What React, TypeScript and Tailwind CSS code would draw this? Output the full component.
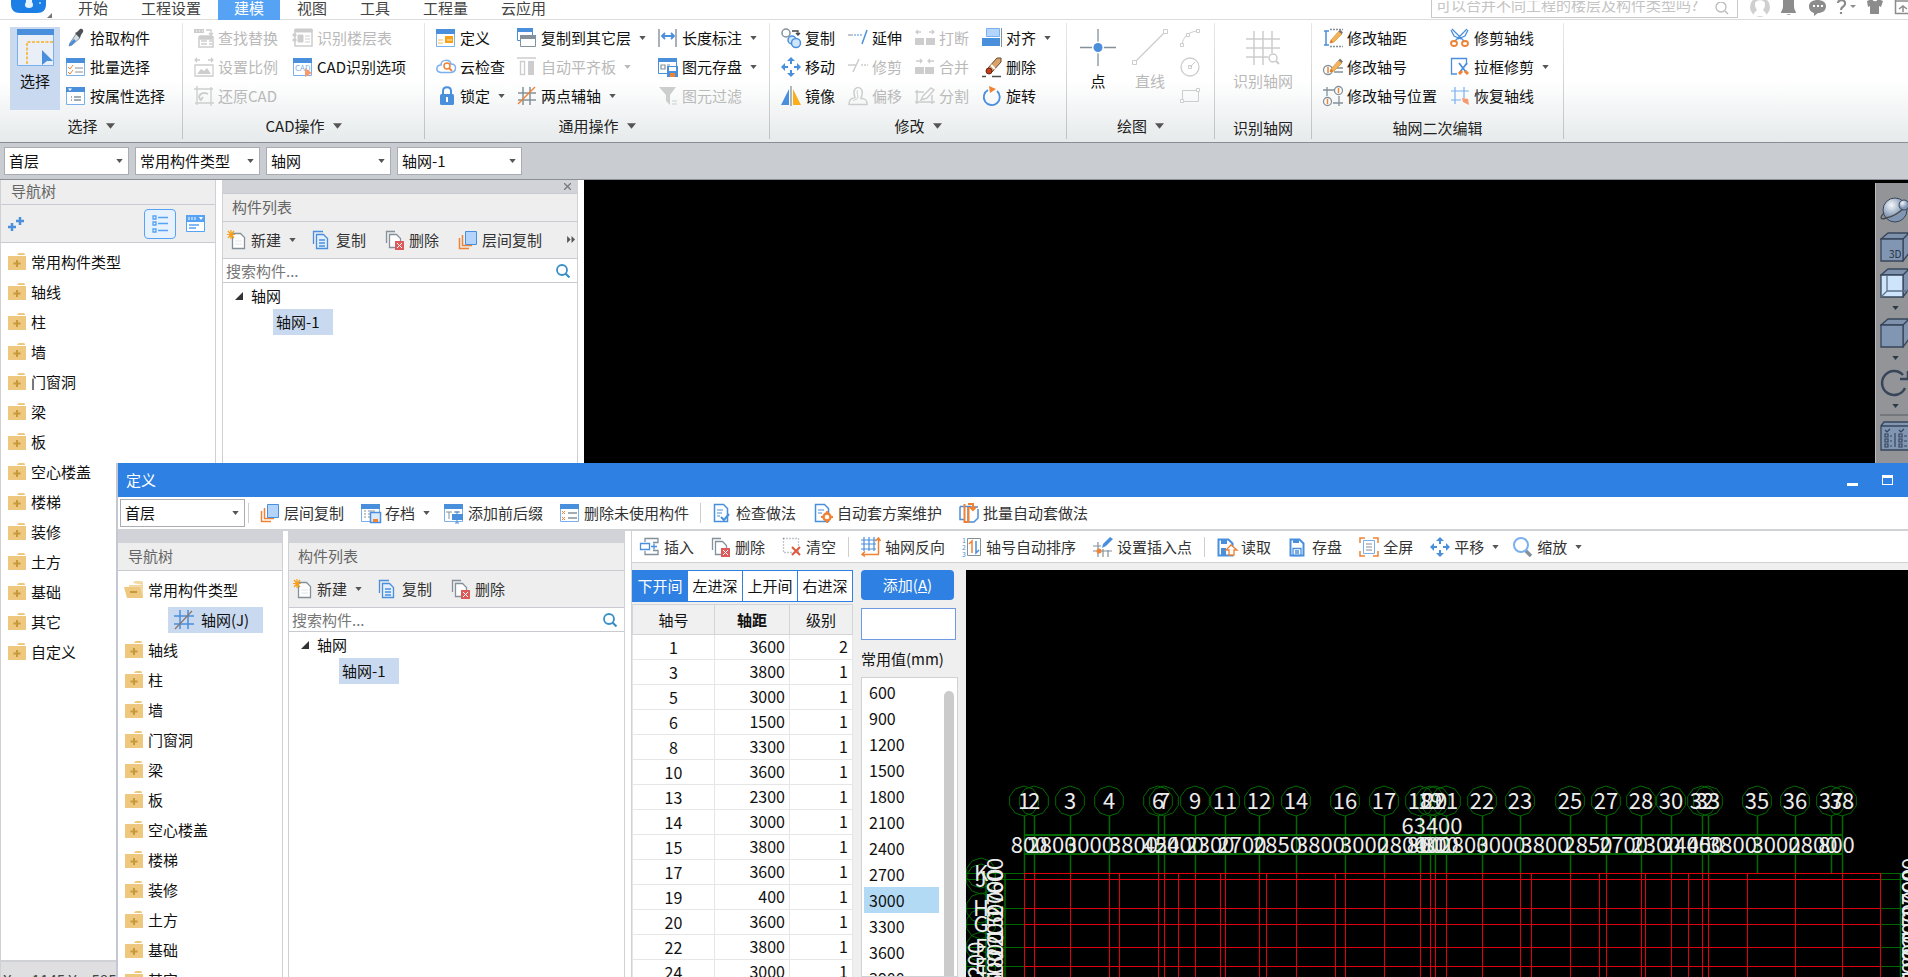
import type { ReactNode } from 'react';

const B = '#4a8fdc';
const L = '#7ab0ee';
const G = '#84919b';
const D = '#cdcdcd';
const O = '#f08233';

const windowIcon = (body: ReactNode) => (
  <>
    <path d="M.5 1.5h18v17H.5z" fill="#fff" stroke={L} />
    <path d="M0 1h19v5H0z" fill={B} />
    {body}
  </>
);

const pencil = (
  <>
    <path d="M8 12 16 3l3 3-8 8-4 1z" fill="#f3b55c" stroke="#d98f38" strokeWidth=".7" />
    <path d="m15.500 3.500 1.500-2 3 3-1.500 1.500z" fill="#7c7474" />
    <path d="m7 15 1-3 2 2z" fill="#e06a22" />
  </>
);

const page = (stroke: string) => (
  <path d="M5.500 3.500h8l4 4v11h-12z" fill="#fff" stroke={stroke} strokeWidth="1.300" />
);

const arrows4 = (
  <path
    d="M10 0 6 4h3v3h2V4h3zM10 20l-4-4h3v-3h2v3h3zM0 10l4-4v3h3v2H4v3zM20 10l-4-4v3h-3v2h3v3z"
    fill={B}
  />
);

const stackIcon = (
  <>
    <path d="M1.500 8v10.500H11M4.500 5v10.500H14" fill="none" stroke={O} strokeWidth="1.500" />
    <path d="M7.500 1.500h11v13h-11z" fill="#b4d5fb" stroke={B} />
  </>
);

const icons: Record<string, ReactNode> = {
  pick: (
    <>
      <path d="m10 6 4 4-8 7-3 1 1-3z" fill="#d5dde4" stroke="#8a949c" />
      <path d="m3 18 1-3 4-4 2 2-4 4z" fill={B} />
      <path d="m9 5 2-1 3-3c2-1 4 1 3 3l-2 3-1 3z" fill="#4d5358" />
    </>
  ),
  batch: windowIcon(
    <>
      <path d="m2 10 2 2 3-4M2 15l2 2 3-4" fill="none" stroke={O} />
      <path d="M9 11h8M9 15h8" stroke={G} />
    </>
  ),
  props: windowIcon(
    <>
      <path d="M2 2.500h4L4 5z" fill="#fff" />
      <path d="M5 11h1m2 0h7M5 14h1m2 0h7" stroke={G} strokeWidth="1.400" />
    </>
  ),
  find: (
    <>
      <path d="M0 1h10v4H0z" fill={D} />
      <path d="M2 3h1m2 0h1m2 0h1" stroke="#fff" />
      <path d="M12 2h5v5m-2-2 2 2 2-2" fill="none" stroke={D} strokeWidth="1.300" />
      <path d="M5 9h14v10H5z" fill="#fff" stroke={D} strokeWidth="1.500" />
      <path d="M6 8h12v3H6zM7 13h6m-6 3h6m2-3h3m-3 3h3" fill={D} stroke={D} strokeWidth="1.300" />
    </>
  ),
  scale: (
    <>
      <path d="M1 3h5M3 1 1 3l2 2M19 3h-5m3-2 2 2-2 2" fill="none" stroke={D} strokeWidth="1.300" />
      <path d="M1 8h18v11H1z" fill="#fff" stroke={D} strokeWidth="1.300" />
      <path d="m3 17 4-5 3 2 3-3 4 6z" fill={D} />
    </>
  ),
  restore: (
    <>
      <path d="M3 0v19M0 3h19M17 1v19M1 17h19" stroke={D} strokeWidth="1.300" />
      <path d="M5 12c0-5 5-6 9-4M5 12l2 2 2-3" fill="none" stroke={D} strokeWidth="1.800" />
    </>
  ),
  floorTable: (
    <>
      <path d="M2 2h17v16H2z" fill="#fff" stroke={D} strokeWidth="1.500" />
      <path d="M2 1h17v3H2zM0 6h3v2H0zm0 5h3v2H0zm5-4h5v7H5zM12 8h5m-5 3h5m-5 3h5" fill={D} stroke={D} />
    </>
  ),
  cad: windowIcon(
    <>
      <text x="2" y="14" fontSize="8" fill={L}>
        CAD
      </text>
      <path d="m12 11 7 5-7 4z" fill="#f59a6b" />
    </>
  ),
  define: windowIcon(
    <>
      <path d="M9 8h8v7H9z" fill="#f6a11b" />
      <path d="M11 12h5M2 12h5M2 15h5" stroke="#fbd28b" strokeWidth="1.300" />
    </>
  ),
  cloud: (
    <>
      <path
        d="M5 15.500C-1 15 0 8 5 8c0-6 9-6 10-1 6 0 6 8 0 8.500z"
        fill="#fff"
        stroke={L}
        strokeWidth="1.500"
      />
      <circle cx="11" cy="9" r="3" fill="none" stroke={O} strokeWidth="1.500" />
      <path d="m13 11 3 3" stroke={O} strokeWidth="1.800" />
    </>
  ),
  lock: (
    <>
      <path d="M7 9V5c0-5 8-5 8 0v4" fill="none" stroke={B} strokeWidth="2" />
      <rect x="4" y="8" width="14" height="11" rx="1.500" fill={B} />
      <path d="M10 11h2v5h-2z" fill="#fff" />
    </>
  ),
  copyFloor: (
    <>
      <path d="M.5.500h15v12H.5z" fill="#fff" stroke={B} />
      <path d="M0 0h16v4H0z" fill={B} />
      <path d="M3.500 7.500h15v11h-15z" fill="#fff" stroke={G} />
      <path d="M3 7h16v4H3z" fill={G} />
    </>
  ),
  alignSlab: (
    <>
      <path d="M0 1h19M3.500 4.500h4v13h-4z" fill="none" stroke={D} strokeWidth="1.400" />
      <path d="M11 4h6v14h-6z" fill={D} />
    </>
  ),
  twoPoint: (
    <>
      <path d="M6 1v18M13 1v18M1 7h18M1 14h18" stroke={G} strokeWidth="1.500" />
      <path d="M1 18 18 1" stroke={O} strokeWidth="1.500" />
    </>
  ),
  measure: (
    <>
      <path d="M1 1v18M18 1v18" stroke={G} strokeWidth="1.400" />
      <path d="M4 8h12M7 5 4 8l3 3m6-6 3 3-3 3" fill="none" stroke={B} strokeWidth="1.800" />
    </>
  ),
  store: (
    <>
      <path d="M.5 1.500h18v15H.5z" fill="#fff" stroke={B} />
      <path d="M0 1h19v4H0z" fill={B} />
      <path d="M3 8h4v4H3zM9 8h3" fill="none" stroke={G} strokeWidth="1.200" />
      <path d="M9 9h11v11H9z" fill={B} />
      <path d="M11 10h7v4h-7z" fill="#fff" />
      <path d="M12 16h5v4h-5z" fill={O} />
    </>
  ),
  filter: (
    <>
      <path d="M1 1h17l-6 8v10l-4-4V9z" fill={D} />
      <path d="M14 15h5m-5 3h5" stroke={D} />
    </>
  ),
  copy2: (
    <>
      <circle cx="5" cy="5" r="4" fill="none" stroke={G} strokeWidth="1.500" />
      <path d="M11 3h6v4m-2-2 2 2 2-2" fill="none" stroke="#444" strokeWidth="1.300" />
      <circle cx="11" cy="12" r="4" fill="#cfe5fb" stroke={B} strokeWidth="1.500" />
      <circle cx="15" cy="15" r="4.500" fill="#cfe5fb" stroke={B} strokeWidth="1.500" />
    </>
  ),
  move: arrows4,
  mirror: (
    <>
      <path d="M8 3v16H0z" fill={B} />
      <path d="M10 0v20" stroke={G} strokeWidth="1.300" />
      <path d="M12 3v16h8z" fill="#f9ae1c" />
    </>
  ),
  extend: (
    <>
      <path d="M0 7h5" stroke={G} />
      <path d="M6 7h8" stroke={B} strokeDasharray="2 1" />
      <path d="m14 16 5-14" stroke={B} strokeWidth="1.500" />
    </>
  ),
  trim: (
    <path d="M0 8h8m5 0h2m1 0h2m1 0h1M5 15 11 2" stroke={D} strokeWidth="1.500" />
  ),
  offset: (
    <>
      <path
        d="M1 18.500h18c0-4-1-6-6-6l1-4c2-9-9-9-8-1l1 4c-4 1-6 2-6 7z"
        fill="none"
        stroke={D}
        strokeWidth="1.500"
      />
      <path d="M5 15c1-2 5-1 5-4 0-2-2-6 0-7" fill="none" stroke={D} />
    </>
  ),
  breakAt: (
    <>
      <path d="M0 10h9v7H0zm11 0h9v7h-9z" fill={D} />
      <path d="M1 4h5M3 2 1 4l2 2m16-2h-5m3-2 2 2-2 2" fill="none" stroke={D} strokeWidth="1.300" />
    </>
  ),
  merge: (
    <>
      <path d="M0 10h9v7H0zm10 0h9v7h-9z" fill={D} />
      <path d="M1 4h6M5 2l2 2-2 2m14-2h-6m2-2-2 2 2 2" fill="none" stroke={D} strokeWidth="1.300" />
    </>
  ),
  split: (
    <>
      <path d="M0 6h9M2 4v14M0 16h20M17 9v9" stroke={D} strokeWidth="1.500" />
      <path d="m6 14 2-4 8-8 3 2-7 8z" fill="#fff" stroke={D} strokeWidth="1.500" />
    </>
  ),
  align: (
    <>
      <path d="M4.500.500h13v8h-13z" fill="#b4d5fb" stroke={L} />
      <path d="M0 10h18v8H0z" fill={B} />
      <path d="M19.500 0v19" stroke={G} />
    </>
  ),
  erase: (
    <>
      <path d="m6 11 9-10h4v4l-9 10z" fill="#d9a46c" stroke="#69472d" />
      <path d="m9 8 4 4" stroke="#fff" strokeWidth="2" />
      <ellipse cx="7" cy="14" rx="3" ry="3" fill="#c93a17" stroke="#5c2a1a" />
      <path d="M0 19.500h4m6 0h9" stroke="#4d4d4d" strokeWidth="1.400" />
    </>
  ),
  rotate: (
    <>
      <path d="M6 4a8 8 0 1 0 9 1" fill="none" stroke={B} strokeWidth="1.800" />
      <path d="m7 0 7 3-6 4z" fill={O} />
    </>
  ),
  arc: (
    <>
      <path d="M2 17C3 9 8 4 17 3" fill="none" stroke={D} />
      <path d="M.5 15.500h3v3h-3zM16.500 1.500h3v3h-3zM6.500 5.500h3v3h-3z" fill="#fff" stroke={D} />
    </>
  ),
  circle: (
    <>
      <circle cx="10" cy="10" r="9" fill="none" stroke={D} strokeWidth="1.300" />
      <path d="m10 10 5-5M8.500 8.500h3v3h-3z" fill="#fff" stroke={D} />
    </>
  ),
  rect: (
    <>
      <path d="M2.500 4.500h16v11h-16z" fill="none" stroke={D} />
      <path d="M.5 13.500h3v3h-3zM16.500 2.500h3v3h-3z" fill="#fff" stroke={D} />
    </>
  ),
  axisGap: (
    <>
      <path d="M3 3v14M1 3h5M1 17h5" stroke={B} strokeWidth="1.500" />
      <path d="M7 1.500h13M7 18.500h13" stroke={G} strokeWidth="1.500" strokeDasharray="2 1" />
      {pencil}
    </>
  ),
  axisNo: (
    <>
      <circle cx="5" cy="13" r="4.500" fill="#fff" stroke={G} strokeWidth="1.300" />
      <path d="M5 10v6" stroke={O} strokeWidth="1.500" />
      <path d="M11 15h9M14 11h6" stroke={G} strokeWidth="1.300" />
      {pencil}
    </>
  ),
  axisPos: (
    <>
      <path d="M4 1v9M0 4h12M16 10v10M10 17h10" stroke={G} strokeWidth="1.300" />
      <circle cx="15.500" cy="4.500" r="4" fill="#fff" stroke={G} strokeWidth="1.300" />
      <circle cx="4.500" cy="15.500" r="4" fill="#fff" stroke={G} strokeWidth="1.300" />
      <path d="M15.500 2v5M4.500 13v5" stroke={O} strokeWidth="1.500" />
    </>
  ),
  scissors: (
    <>
      <path d="m2 1 12 12M17 1 5 13M1 2l3 6 7 3M18 2l-3 6-7 3" fill="none" stroke={B} strokeWidth="1.300" />
      <ellipse cx="4" cy="15.500" rx="3" ry="2.500" fill="none" stroke={O} strokeWidth="1.800" />
      <ellipse cx="15" cy="15.500" rx="3" ry="2.500" fill="none" stroke={O} strokeWidth="1.800" />
    </>
  ),
  boxTrim: (
    <>
      <path d="M7 17H1.500V1.500h15V8" fill="none" stroke={B} strokeWidth="1.300" />
      <path d="m9 6 7 9M17 6l-7 9" stroke={B} strokeWidth="1.800" />
      <path d="m9 17 3-3m6 3-3-3" stroke={O} strokeWidth="3" />
    </>
  ),
  axisBack: (
    <>
      <path d="M5 1v17M14 1v11M1 5h18M1 14h10" stroke={L} strokeWidth="1.200" />
      <path d="m12 12 6 1 1 6-6-3z" fill="#f59a6b" />
    </>
  ),
  create: (
    <>
      {page(G)}
      <path d="M4 0v9M0 4.500h8M1 1l6 7M7 1 1 8" stroke="#f6a11b" strokeWidth="1.200" />
      <path d="M8 11h7m-7 3h7" stroke="#dfe6ea" />
    </>
  ),
  copyDoc: (
    <>
      <path d="M1.500 14V1.500H11" fill="none" stroke={B} strokeWidth="1.300" />
      <path d="M4.500 4.500h7l4 4v10h-11z" fill="#e3effc" stroke={B} strokeWidth="1.300" />
      <path d="M7 10h6m-6 3h6m-6 3h6" stroke={B} strokeWidth="1.300" />
    </>
  ),
  deleteDoc: (
    <>
      <path d="M1.500 13V1.500H10" fill="none" stroke={G} strokeWidth="1.300" />
      <path d="M4.500 4.500h7l4 4v9h-11z" fill="#fff" stroke={G} strokeWidth="1.300" />
      <path d="M10 11h9v9h-9z" fill="#dc5a5a" />
      <path d="m12 13 5 5m0-5-5 5" stroke="#fff" />
    </>
  ),
  layers: stackIcon,
  archive: windowIcon(
    <>
      <path d="M3 8h2m2 0h7M3 11h2m2 0h3M3 14h2m2 0h3" stroke={G} />
      <path d="M9.500 9.500h10v10h-10z" fill="#dcebfc" stroke={B} strokeWidth="1.500" />
      <path d="M12 16h5v3h-5z" fill={O} />
    </>
  ),
  prefix: windowIcon(
    <>
      <path d="M2 9h6M5 9v7M10 9h6" stroke={G} />
      <path d="M8 11h11v6H8z" fill={B} />
      <path d="M13 9v11m-2-11h4m-4 11h4" stroke={B} />
    </>
  ),
  removeUnused: windowIcon(
    <>
      <path d="m2 8 3 3m0-3-3 3m0 3 3 3m0-3-3 3" stroke={O} />
      <path d="M8 10h9m-9 5h9" stroke={G} strokeWidth="1.300" />
    </>
  ),
  check: (
    <>
      <path d="M2.500 1.500h9l4 4v13h-13z" fill="#fff" stroke={B} strokeWidth="1.500" />
      <path d="M5 7h6m-6 3h5m-5 3h3" stroke={B} />
      <path d="m9 14 3 3 5-6" fill="none" stroke={B} strokeWidth="2" />
    </>
  ),
  auto: (
    <>
      <path d="M2.500 1.500h9l4 4v13h-13z" fill="#fff" stroke={B} strokeWidth="1.500" />
      <path d="M5 7h6m-6 3h4" stroke={B} />
      <circle cx="14" cy="14" r="3.500" fill="#fff" stroke={O} strokeWidth="2.500" />
      <path d="M14 8v3m0 6v3M8 14h3m6 0h3" stroke={O} strokeWidth="1.800" />
    </>
  ),
  batchAuto: (
    <>
      <path d="M1 3.500h11m-11 0v13h4M19 6v9l-4 4H9V4h10" fill="#fff" stroke={B} strokeWidth="1.500" />
      <path d="M5.500 1v18h4V4M9 1h5v6m-3-3 3 3 3-3" fill="none" stroke={O} strokeWidth="2" />
    </>
  ),
  insert: (
    <>
      <path d="M5 5V1.500h13v4h-5M5 14v3.500h13v-4h-5" fill="none" stroke={G} strokeWidth="1.300" />
      <path d="M.5 6.500h9v6h-9z" fill="#fff" stroke={B} strokeWidth="1.300" />
      <path d="M11 9.500h6m-3-3v6" stroke={B} strokeWidth="1.300" />
    </>
  ),
  clear: (
    <>
      <path d="M1.500 1.500h15v14h-15z" fill="none" stroke={G} strokeDasharray="1 2" strokeWidth="1.300" />
      <path d="m10 10 8 8m0-8-8 8" stroke="#dd5a3c" strokeWidth="2" />
    </>
  ),
  reverse: (
    <>
      <path d="M3 0v14M8 0v14M13 0v14M0 3h15M0 7h15M0 12h15" stroke={B} strokeWidth="1.200" />
      <path d="M17.500 17V1m-3 3 3-3 2 3M18 17.500H1m3-3-3 3 3 2" fill="none" stroke={O} strokeWidth="1.500" />
    </>
  ),
  sort: (
    <>
      <text x="0" y="6" fontSize="7" fill={B}>1</text>
      <text x="0" y="13" fontSize="7" fill={B}>2</text>
      <text x="0" y="20" fontSize="7" fill={B}>3</text>
      <path d="M5.500 1.500h13v17h-13z" fill="#fff" stroke={G} />
      <path d="M10 16V4L7 7" fill="none" stroke={O} strokeWidth="1.500" />
      <path d="M14 4v12l3-3" fill="none" stroke={B} strokeWidth="1.500" />
    </>
  ),
  insertPoint: (
    <>
      <path d="M5 5v15M10 12v8M0 9h8M0 14h19M15 13v7" stroke={G} strokeWidth="1.200" />
      <path d="m9 11 1-4 7-7 3 2-7 7z" fill={B} />
      <circle cx="6" cy="14" r="2.500" fill={O} />
    </>
  ),
  read: (
    <>
      <path d="M1.500 2.500h10l4 4v12h-14z" fill="#fff" stroke={B} strokeWidth="2" />
      <path d="M4 3h6v4H4zM4 11h5v7H4z" fill={B} />
      <path d="m14 8-5 5h3v5h5v-5h3z" fill="#fff" stroke={O} strokeWidth="1.300" />
    </>
  ),
  save: (
    <>
      <path d="M2.500 2.500h9l4 4v12h-13z" fill="#fff" stroke={B} strokeWidth="2" />
      <path d="M5 3h6v3H5z" fill={B} />
      <path d="M5 11.500h8v7H5zM7 14h4m-4 2h4" fill="none" stroke={B} strokeWidth="1.300" />
    </>
  ),
  full: (
    <>
      <path d="M1 6V1h5m8 0h5v5M1 14v5h5m8 0h5v-5" fill="none" stroke={O} strokeWidth="1.500" />
      <path d="M4.500 3.500h11v13h-11z" fill="#fff" stroke={L} />
      <path d="M7 7h6m-6 3h6m-6 3h6" stroke={G} />
    </>
  ),
  zoom: (
    <>
      <path d="m12 13 6 6" stroke={G} strokeWidth="3.500" />
      <circle cx="8" cy="8" r="7" fill="#fff" stroke={L} strokeWidth="2" />
    </>
  ),
  grid: (
    <>
      <path d="M6 0v19M14 0v19M0 6h20M0 14h20" stroke={B} strokeWidth="1.500" />
      <path d="M1 19 18 1" stroke="#8c7468" strokeWidth="1.200" />
    </>
  ),
  folder: (
    <>
      <path d="M10 3c1-2 2-2 3-2h3c1 0 2 0 2 2z" fill="#efc880" />
      <path d="M1 4h18v14H1z" fill="#efc880" />
      <path d="M10 8v7m-3.500-3.500h7" stroke="#c8993b" strokeWidth="2" />
    </>
  ),
  folderOpen: (
    <>
      <path d="M9 3c1-2 2-2 4-2h3c2 0 3 0 3 2v15H5V5h14" fill="#f3d9a6" />
      <path d="M0 7h16l3 11H3z" fill="#efc880" />
      <path d="M6 12h7" stroke="#c8993b" strokeWidth="2" />
    </>
  ),
};

function Icon({ name, size = 'w-5 h-5' }: { name: string; size?: string }) {
  return (
    <svg viewBox="0 0 20 20" className={`${size} shrink-0 overflow-visible`} aria-hidden="true">
      {icons[name]}
    </svg>
  );
}

function Caret({ big = false, color = '#555' }: { big?: boolean; color?: string }) {
  return (
    <svg viewBox="0 0 8 5" className={`shrink-0 ${big ? 'w-[9px] h-[6px]' : 'w-[7px] h-[4px]'}`} aria-hidden="true">
      <path d="M0 0h8L4 5z" fill={color} />
    </svg>
  );
}

interface Item {
  icon: string;
  label: string;
  off?: boolean;
  caret?: boolean;
}

function RibbonItem({ icon, label, off, caret }: Item) {
  return (
    <button
      disabled={off}
      className={`flex h-[29px] items-center gap-1 whitespace-nowrap ${off ? 'text-[#b9b9b9]' : 'text-[#111]'}`}
    >
      <Icon name={icon} />
      {label}
      {caret && (
        <span className="pl-1">
          <Caret color={off ? '#bbb' : '#555'} />
        </span>
      )}
    </button>
  );
}

interface GroupProps {
  title: string;
  width: string;
  caret?: boolean;
  pad?: string;
  gap?: string;
  lead?: ReactNode;
  columns?: Item[][];
  children?: ReactNode;
}

function RibbonGroup({ title, width, caret, pad = 'pl-[11px]', gap = 'gap-[13px]', lead, columns = [], children }: GroupProps) {
  return (
    <section className={`flex shrink-0 flex-col pt-[3px] ${width}`}>
      <div className={`flex h-[87px] shrink-0 ${pad} ${gap}`}>
        {lead}
        {columns.map((col, i) => (
          <div key={i} className="flex flex-col items-start">
            {col.map((item) => (
              <RibbonItem key={item.label} {...item} />
            ))}
          </div>
        ))}
        {children}
      </div>
      <div className={`flex flex-1 items-center justify-center gap-2 text-[#222] ${caret ? '' : 'pt-1'}`}>
        {title}
        {caret && <Caret big />}
      </div>
    </section>
  );
}

function Divider() {
  return <div className="my-[3px] w-px shrink-0 bg-gradient-to-b from-[#e8e8e8] to-[#bfc1c3]" />;
}

const cadCols: Item[][] = [
  [
    { icon: 'find', label: '查找替换', off: true },
    { icon: 'scale', label: '设置比例', off: true },
    { icon: 'restore', label: '还原CAD', off: true },
  ],
  [
    { icon: 'floorTable', label: '识别楼层表', off: true },
    { icon: 'cad', label: 'CAD识别选项' },
  ],
];

const commonCols: Item[][] = [
  [
    { icon: 'define', label: '定义' },
    { icon: 'cloud', label: '云检查' },
    { icon: 'lock', label: '锁定', caret: true },
  ],
  [
    { icon: 'copyFloor', label: '复制到其它层', caret: true },
    { icon: 'alignSlab', label: '自动平齐板', off: true, caret: true },
    { icon: 'twoPoint', label: '两点辅轴', caret: true },
  ],
  [
    { icon: 'measure', label: '长度标注', caret: true },
    { icon: 'store', label: '图元存盘', caret: true },
    { icon: 'filter', label: '图元过滤', off: true },
  ],
];

const editCols: Item[][] = [
  [
    { icon: 'copy2', label: '复制' },
    { icon: 'move', label: '移动' },
    { icon: 'mirror', label: '镜像' },
  ],
  [
    { icon: 'extend', label: '延伸' },
    { icon: 'trim', label: '修剪', off: true },
    { icon: 'offset', label: '偏移', off: true },
  ],
  [
    { icon: 'breakAt', label: '打断', off: true },
    { icon: 'merge', label: '合并', off: true },
    { icon: 'split', label: '分割', off: true },
  ],
  [
    { icon: 'align', label: '对齐', caret: true },
    { icon: 'erase', label: '删除' },
    { icon: 'rotate', label: '旋转' },
  ],
];

const axisCols: Item[][] = [
  [
    { icon: 'axisGap', label: '修改轴距' },
    { icon: 'axisNo', label: '修改轴号' },
    { icon: 'axisPos', label: '修改轴号位置' },
  ],
  [
    { icon: 'scissors', label: '修剪轴线' },
    { icon: 'boxTrim', label: '拉框修剪', caret: true },
    { icon: 'axisBack', label: '恢复轴线' },
  ],
];

function MenuBar() {
  const tabs = ['开始', '工程设置', '建模', '视图', '工具', '工程量', '云应用'];
  return (
    <header className="flex h-5 shrink-0 items-start border-b border-[#dcdcdc] bg-white">
      <div className="w-[62px] shrink-0 pl-[11px]">
        <svg viewBox="0 0 42 19" className="h-[19px] w-[42px]" aria-hidden="true">
          <path d="M0 0h35v4c0 6-3 9-9 9H9c-6 0-9-3-9-9z" fill="#1b7fe6" />
          <path d="M15 0h6v2c2 3 1 6-3 6s-5-3-3-6z" fill="#e6f3ff" />
          <path d="M28 2h2v2h-2z" fill="#8cc4fa" />
          <path d="M41 13v5h-5z" fill="#777" />
        </svg>
      </div>
      <nav className="flex gap-px">
        {tabs.map((t) => (
          <button
            key={t}
            className={`h-5 px-4 pb-1 leading-4 ${t === '建模' ? 'bg-[#56a3f5] text-white' : 'text-[#444]'}`}
          >
            {t}
          </button>
        ))}
      </nav>
      <div className="ml-auto flex h-[18px] w-[307px] items-center border border-t-0 border-[#c9c9c9] pr-2 pl-1">
        <input
          aria-label="搜索"
          placeholder="可以合并不同工程的楼层及构件类型吗?"
          className="h-4 min-w-0 flex-1 pb-2 outline-none placeholder:text-[#c4c4c4]"
        />
        <svg viewBox="0 0 14 14" className="h-[14px] w-[14px]" aria-hidden="true">
          <circle cx="6" cy="5" r="5" fill="none" stroke="#bbb" strokeWidth="1.300" />
          <path d="m10 9 3 3" stroke="#bbb" strokeWidth="1.500" />
        </svg>
      </div>
      <svg viewBox="0 0 170 19" className="h-[19px] w-[170px] shrink-0" aria-hidden="true">
        <circle cx="22" cy="7" r="10" fill="#cfcfcf" />
        <path d="M17 4c0-5 10-5 10 0 0 3-1 5-2 6 1 2 4 2 3 6H16c-1-4 2-4 3-6-1-1-2-3-2-6z" fill="#fff" />
        <path d="M45 0h11v6c0 4 2 5 2 7H43c0-2 2-3 2-7zM48 14h5l-2 1z" fill="#8c8c8c" />
        <path d="M71 6c0-8 17-8 17 0 0 5-4 7-8 7l-4 3v-3c-3-1-5-3-5-7z" fill="#8c8c8c" />
        <path d="M75 6h2m2 0h2m2 0h2" stroke="#fff" strokeWidth="2" />
        <path d="M100 3c0-4 8-4 7 1 0 3-4 2-4 6m0 2v2" fill="none" stroke="#8c8c8c" strokeWidth="2.200" />
        <path d="M112 5h6l-3 3z" fill="#8c8c8c" />
        <path d="M129 1l5-2c1 3 5 3 6 0l5 2-2 6-2-1v8h-9V6l-2 1z" fill="#8c8c8c" />
        <path d="M157.500-2v15.500H172M157 1h14m-6 11V6m-4 3 4-3 4 3" fill="none" stroke="#8c8c8c" strokeWidth="1.500" />
      </svg>
    </header>
  );
}

function Ribbon() {
  return (
    <div className="flex h-[123px] shrink-0 border-b border-[#8a8e94] bg-gradient-to-b from-white from-50% to-[#e6eaeb]">
      <RibbonGroup
        title="选择"
        width="w-[182px]"
        caret
        pad="pl-[10px]"
        gap="gap-[6px]"
        lead={
          <button className="mt-1 flex h-[83px] w-[50px] flex-col items-center bg-[#c9d9ef] pt-[2px]">
            <svg viewBox="0 0 37 37" className="h-[37px] w-[37px]" aria-hidden="true">
              <path d="M.5.500h36v36H.5z" fill="#e9eef7" stroke={L} />
              <path d="M0 0h37v6H0z" fill={B} />
              <path d="M10 35V13h26" fill="none" stroke="#f9b021" strokeWidth="1.500" strokeDasharray="3 1.500" />
              <path d="m25 21 11 11h-6l-5 4z" fill={B} />
            </svg>
            <span className="pt-[5px] leading-5">选择</span>
          </button>
        }
        columns={[
          [
            { icon: 'pick', label: '拾取构件' },
            { icon: 'batch', label: '批量选择' },
            { icon: 'props', label: '按属性选择' },
          ],
        ]}
      />
      <Divider />
      <RibbonGroup title="CAD操作" width="w-[241px]" caret gap="gap-[15px]" columns={cadCols} />
      <Divider />
      <RibbonGroup title="通用操作" width="w-[344px]" caret gap="gap-[12px]" columns={commonCols} />
      <Divider />
      <RibbonGroup title="修改" width="w-[296px]" caret columns={editCols} />
      <Divider />
      <RibbonGroup title="绘图" width="w-[147px]" caret pad="pl-[13px]" gap="gap-4">
        <button className="flex w-9 flex-col items-center pt-[6px]">
          <svg viewBox="0 0 36 37" className="h-[37px] w-9" aria-hidden="true">
            <path d="M0 18.500h36M18 0v37" stroke={G} strokeWidth="1.300" />
            <circle cx="18" cy="18.500" r="6" fill="#fff" />
            <circle cx="18" cy="18.500" r="4.500" fill={B} />
          </svg>
          <span className="pt-[5px] leading-5">点</span>
        </button>
        <button disabled className="flex w-9 flex-col items-center pt-[6px] text-[#b9b9b9]">
          <svg viewBox="0 0 36 37" className="h-[37px] w-9" aria-hidden="true">
            <path d="M2 34 33 3" stroke={D} strokeWidth="1.300" />
            <path d="M.5 31.500h4v4h-4zM31.500.500h4v4h-4z" fill="#fff" stroke={D} />
          </svg>
          <span className="pt-[5px] leading-5">直线</span>
        </button>
        <div className="-ml-1 flex flex-col">
          {['arc', 'circle', 'rect'].map((n) => (
            <button key={n} disabled aria-label={n} className="flex h-[29px] items-center">
              <Icon name={n} />
            </button>
          ))}
        </div>
      </RibbonGroup>
      <Divider />
      <RibbonGroup title="识别轴网" width="w-[96px]" pad="justify-center">
        <button disabled className="flex flex-col items-center pt-[7px] text-[#b9b9b9]">
          <svg viewBox="0 0 34 34" className="h-[36px] w-[34px]" aria-hidden="true">
            <path d="M8 0v34M17 0v34M26 0v22M0 8h34M0 17h34M0 26h22" stroke={D} strokeWidth="1.500" />
            <circle cx="27" cy="27" r="4" fill="#fff" stroke={D} strokeWidth="1.500" />
            <path d="m30 30 3 3" stroke={D} strokeWidth="2" />
          </svg>
          <span className="pt-[5px] leading-5">识别轴网</span>
        </button>
      </RibbonGroup>
      <Divider />
      <RibbonGroup title="轴网二次编辑" width="w-[251px]" columns={axisCols} />
      <Divider />
    </div>
  );
}

function Combo({ label, value }: { label: string; value: string }) {
  return (
    <div className="relative w-[125px] shrink-0">
      <select
        aria-label={label}
        className="block h-7 w-full appearance-none border border-[#a9adb2] bg-white pr-5 pl-1 text-[15px] text-[#111]"
      >
        <option>{value}</option>
      </select>
      <span className="pointer-events-none absolute top-3 right-[6px] flex">
        <Caret />
      </span>
    </div>
  );
}

function ToolButton({ icon, label, caret }: Item) {
  return (
    <button
      className={`flex h-7 shrink-0 items-center gap-1 pl-2 whitespace-nowrap text-[#333] ${caret ? 'pr-[5px]' : 'pr-2'}`}
    >
      <Icon name={icon} />
      {label}
      {caret && (
        <span className="pl-1">
          <Caret />
        </span>
      )}
    </button>
  );
}

const navItems = ['常用构件类型', '轴线', '柱', '墙', '门窗洞', '梁', '板', '空心楼盖', '楼梯', '装修', '土方', '基础', '其它', '自定义'];

function NavTree({ expanded = false }: { expanded?: boolean }) {
  return (
    <ul className="min-h-0 flex-1 overflow-hidden bg-white pt-1 pl-[6px]">
      {navItems.map((item, i) => (
        <li key={item}>
          <button className="flex h-[30px] items-center gap-1 text-[#111]">
            <Icon name={expanded && i === 0 ? 'folderOpen' : 'folder'} />
            {item}
          </button>
          {expanded && i === 0 && (
            <button className="my-[2px] ml-11 flex h-[26px] w-[95px] items-center gap-[7px] bg-[#c9d9ef] pl-[6px]">
              <Icon name="grid" />
              轴网(J)
            </button>
          )}
        </li>
      ))}
    </ul>
  );
}

function ComponentList({ wide = false }: { wide?: boolean }) {
  return (
    <>
      <h2 className="flex h-7 shrink-0 items-center border-b border-[#c8cacf] bg-[#eee] pb-[2px] pl-[9px] text-[#666]">
        构件列表
      </h2>
      <div className="flex h-[37px] shrink-0 items-center overflow-hidden border-b border-[#c8cacf] bg-[#eee] pb-px">
        <div className="-ml-1 flex gap-[3px]">
          <ToolButton icon="create" label="新建" caret />
          <ToolButton icon="copyDoc" label="复制" />
          <ToolButton icon="deleteDoc" label="删除" />
          {wide && <ToolButton icon="layers" label="层间复制" />}
        </div>
        {wide && (
          <button aria-label="更多" className="mr-px ml-auto">
            <svg viewBox="0 0 10 8" className="h-[7px] w-[9px]" aria-hidden="true">
              <path d="m0 0 4 4-4 4zM5 0l4 4-4 4z" fill="#555" />
            </svg>
          </button>
        )}
      </div>
      <div className="flex h-6 shrink-0 items-center border-b border-[#c8cacf] bg-white pr-[7px] pl-[3px]">
        <input
          aria-label="搜索构件"
          placeholder="搜索构件..."
          className="min-w-0 flex-1 text-[15px] leading-5 outline-none placeholder:text-[#777]"
        />
        <svg viewBox="0 0 14 14" className="h-[14px] w-[14px]" aria-hidden="true">
          <circle cx="6" cy="6" r="5" fill="none" stroke="#3a8fc8" strokeWidth="1.800" />
          <path d="m9.500 9.500 4 4" stroke="#3a8fc8" strokeWidth="2.200" />
        </svg>
      </div>
      <div className="min-h-0 flex-1 bg-white">
        <div className="flex h-[26px] items-center gap-2 pl-3">
          <svg viewBox="0 0 8 8" className="h-2 w-2" aria-hidden="true">
            <path d="M8 0v8H0z" fill="#333" />
          </svg>
          轴网
        </div>
        <button className="ml-[50px] block h-[26px] w-[60px] bg-[#c9d9ef] pl-[3px] text-left">轴网-1</button>
      </div>
    </>
  );
}

// Axis positions in model-view pixels
const axes: [string, number][] = [
  ['1', 1024], ['2', 1034], ['3', 1070], ['4', 1109], ['6', 1158], ['7', 1164], ['9', 1195],
  ['11', 1225], ['12', 1259], ['14', 1296], ['16', 1345], ['17', 1384], ['18', 1420], ['19', 1430],
  ['20', 1435], ['21', 1446], ['22', 1482], ['23', 1520], ['25', 1570], ['27', 1606], ['28', 1641],
  ['30', 1671], ['32', 1702], ['33', 1708], ['35', 1757], ['36', 1795], ['37', 1831], ['38', 1842],
];
const spans = [
  '800', '2800', '3000', '3800', '450', '2400', '2300', '2700', '2850', '3800', '3000', '2800', '800', '400',
  '800', '2800', '3000', '3800', '2850', '2700', '2300', '2400', '450', '3800', '3000', '2800', '800',
];
const redX = [
  1024, 1034, 1070, 1109, 1119, 1158, 1164, 1178, 1195, 1220, 1225, 1259, 1266, 1296, 1335, 1345, 1384, 1420,
  1430, 1435, 1446, 1482, 1520, 1531, 1570, 1599, 1606, 1641, 1645, 1671, 1688, 1702, 1708, 1747, 1795, 1842, 1880,
];
const rowY = [873, 879, 908, 924, 947, 966];
const rowSpans: [string, number][] = [
  ['600', 876], ['2700', 893], ['1500', 916], ['2200', 935], ['1800', 956], ['1500', 974],
];
const rowNames: [string, number][] = [['K', 873], ['J', 879], ['H', 908], ['G', 924], ['F', 947], ['E', 966]];

function bubble(x: number, y: number) {
  const pts = Array.from({ length: 10 }, (_, i) => {
    const a = (Math.PI / 5) * (i + 0.5);
    return `${(x + 15 * Math.cos(a)).toFixed(1)},${(y + 15 * Math.sin(a)).toFixed(1)}`;
  });
  return pts.join(' ');
}

function AxisView() {
  return (
    <svg
      viewBox="966 570 942 407"
      className="h-[407px] w-[942px]"
      fontSize="22"
      textAnchor="middle"
      aria-label="轴网"
    >
      <g stroke="#006a00" fill="none">
        {axes.map(([n, x]) => (
          <g key={n}>
            <polygon points={bubble(x, 801)} />
            <path d={`M${x}.500 816V873`} strokeWidth="1.500" />
          </g>
        ))}
        <path d="M1024 835H1842M1024 854H1842" strokeWidth="1.800" />
        {rowY.map((y) => (
          <g key={y}>
            <polygon points={bubble(981, y)} />
            <path d={`M966 ${y}.500H1024M1880 ${y}.500H1908`} />
          </g>
        ))}
        <path d="M1005 873V977M986 873V977M1900.500 873V977" strokeWidth="1.500" />
      </g>
      <g stroke="#e00010">
        {redX.map((x) => (
          <path key={x} d={`M${x}.500 873V977`} />
        ))}
        {rowY.map((y) => (
          <path key={y} d={`M1024 ${y}.500H1880`} />
        ))}
      </g>
      <g fill="#ececec">
        {axes.map(([n, x]) => (
          <text key={n} x={x} y="809">
            {n}
          </text>
        ))}
        {spans.map((s, i) => (
          <text key={i} x={(axes[i][1] + axes[i + 1][1]) / 2} y="853">
            {s}
          </text>
        ))}
        <text x="1432" y="834">
          63400
        </text>
        {rowNames.map(([n, y]) => (
          <text key={n} x="981" y={y + 8}>
            {n}
          </text>
        ))}
        {rowSpans.map(([s, y]) => (
          <text key={y} transform={`translate(1003 ${y}) rotate(-90)`}>
            {s}
          </text>
        ))}
        {rowSpans.map(([s, y]) => (
          <text key={y} transform={`translate(1918 ${y}) rotate(-90)`}>
            {s}
          </text>
        ))}
        <text transform="translate(984 972) rotate(-90)">14200</text>
      </g>
    </svg>
  );
}

const spacingRows = [
  ['1', '3600', '2'], ['3', '3800', '1'], ['5', '3000', '1'], ['6', '1500', '1'], ['8', '3300', '1'],
  ['10', '3600', '1'], ['13', '2300', '1'], ['14', '3000', '1'], ['15', '3800', '1'], ['17', '3600', '1'],
  ['19', '400', '1'], ['20', '3600', '1'], ['22', '3800', '1'], ['24', '3000', '1'],
];
const commonValues = ['600', '900', '1200', '1500', '1800', '2100', '2400', '2700', '3000', '3300', '3600', '3900'];

function SpacingTable() {
  return (
    <div className="flex w-[221px] shrink-0 flex-col gap-[2px]">
      <div role="tablist" className="flex h-8 shrink-0 divide-x divide-[#2e80e2] border border-[#2e80e2] bg-white">
        {['下开间', '左进深', '上开间', '右进深'].map((t, i) => (
          <button
            key={t}
            role="tab"
            aria-selected={i === 0}
            className={`flex-1 ${i === 0 ? 'bg-[#2e80e2] text-white' : 'text-[#111]'}`}
          >
            {t}
          </button>
        ))}
      </div>
      <table className="w-full table-fixed border-collapse border border-[#d4d5d8] bg-white">
        <thead>
          <tr className="h-[30px] bg-[#f0f0f0]">
            <th className="w-[82px] border border-[#d4d5d8] p-0 font-normal">轴号</th>
            <th className="w-[75px] border border-[#d4d5d8] p-0 font-bold">轴距</th>
            <th className="border border-[#d4d5d8] p-0 font-normal">级别</th>
          </tr>
        </thead>
        <tbody className="text-base leading-5">
          {spacingRows.map(([no, gap, level]) => (
            <tr key={no} className="h-[25px]">
              <td className="border border-[#e6e6e6] p-0 text-center">{no}</td>
              <td className="border border-[#e6e6e6] p-0 pr-1 pb-[2px] text-right">{gap}</td>
              <td className="border border-[#e6e6e6] p-0 pr-1 pb-[2px] text-right">{level}</td>
            </tr>
          ))}
        </tbody>
      </table>
    </div>
  );
}

function ValuePicker() {
  return (
    <div className="flex w-[97px] shrink-0 flex-col">
      <button className="mr-1 h-[30px] shrink-0 rounded-[4px] bg-[#2e80e2] text-white">
        添加(<u>A</u>)
      </button>
      <input id="spacing" className="mt-2 mr-[2px] h-8 shrink-0 border border-[#6f9ae0] bg-white px-1 outline-none" />
      <label htmlFor="spacing" className="mt-2 h-[22px] leading-[22px] whitespace-nowrap text-[#111]">
        常用值(mm)
      </label>
      <div className="mt-[7px] flex min-h-0 flex-1 overflow-hidden border border-[#cfd1d5] bg-white pt-px pl-[2px]">
        <ul className="w-[75px] shrink-0 text-base">
          {commonValues.map((v) => (
            <li key={v} className={`h-[26px] pl-[5px] leading-[26px] ${v === '3000' ? 'bg-[#b3daf5]' : ''}`}>
              {v}
            </li>
          ))}
        </ul>
        <div className="mt-3 mr-[3px] ml-auto w-[10px] rounded-t-full bg-[#cbcbcb]" />
      </div>
    </div>
  );
}

function Sep({ tight = false }: { tight?: boolean }) {
  return <div className={`h-5 w-px shrink-0 bg-[#cfcfcf] ${tight ? 'mx-[2px]' : 'mx-[3px]'}`} />;
}

function DefineDialog() {
  return (
    <div
      role="dialog"
      aria-label="定义"
      className="absolute top-[463px] right-0 bottom-0 left-[116px] flex flex-col overflow-hidden border-l-2 border-[#c3c8d2] bg-[#efefef]"
    >
      <div className="-ml-[2px] flex h-[34px] shrink-0 items-center bg-[#2e80e2] pr-[15px] pl-[10px] text-white">
        定义
        <button aria-label="最小化" className="mr-6 ml-auto h-3 w-[11px] border-b-[3px] border-white" />
        <button aria-label="最大化" className="h-[10px] w-[11px] border border-t-[3px] border-white" />
      </div>
      <div className="flex h-[34px] shrink-0 items-center gap-px border-b-2 border-[#cfd2d6] bg-white pl-[2px]">
        <Combo label="楼层" value="首层" />
        <Sep tight />
        <ToolButton icon="layers" label="层间复制" />
        <ToolButton icon="archive" label="存档" caret />
        <ToolButton icon="prefix" label="添加前后缀" />
        <ToolButton icon="removeUnused" label="删除未使用构件" />
        <Sep tight />
        <ToolButton icon="check" label="检查做法" />
        <ToolButton icon="auto" label="自动套方案维护" />
        <ToolButton icon="batchAuto" label="批量自动套做法" />
      </div>
      <div className="flex min-h-0 flex-1">
        <aside className="flex w-[165px] shrink-0 flex-col border-r border-[#cfd1d5]">
          <div className="h-3 shrink-0 bg-[#d2d3d9]" />
          <h2 className="flex h-7 shrink-0 items-center border-b border-[#c8cacf] bg-[#eee] pb-[2px] pl-[10px] text-[#666]">
            导航树
          </h2>
          <NavTree expanded />
        </aside>
        <div className="w-[5px] shrink-0 bg-white" />
        <section className="flex w-[337px] shrink-0 flex-col border-x border-[#cfd1d5]">
          <div className="h-3 shrink-0 bg-[#d2d3d9]" />
          <ComponentList />
        </section>
        <div className="w-[6px] shrink-0 bg-white" />
        <main className="flex min-w-0 flex-1 flex-col border-l border-[#cfd1d5]">
          <div className="flex h-8 shrink-0 items-center gap-px border-b border-[#cfd1d5] bg-white">
            <ToolButton icon="insert" label="插入" />
            <ToolButton icon="deleteDoc" label="删除" />
            <ToolButton icon="clear" label="清空" />
            <Sep />
            <ToolButton icon="reverse" label="轴网反向" />
            <ToolButton icon="sort" label="轴号自动排序" />
            <ToolButton icon="insertPoint" label="设置插入点" />
            <Sep />
            <ToolButton icon="read" label="读取" />
            <ToolButton icon="save" label="存盘" />
            <ToolButton icon="full" label="全屏" />
            <ToolButton icon="move" label="平移" caret />
            <ToolButton icon="zoom" label="缩放" caret />
          </div>
          <div className="flex min-h-0 flex-1 gap-2 overflow-hidden pt-[7px]">
            <SpacingTable />
            <ValuePicker />
            <div className="min-w-0 flex-1 overflow-hidden bg-black">
              <AxisView />
            </div>
          </div>
        </main>
      </div>
    </div>
  );
}

function cube(face: string, extra?: ReactNode) {
  return (
    <svg viewBox="0 0 30 30" className="h-[30px] w-[30px] shrink-0" aria-hidden="true">
      <path d="M1 7 8 1h21l-6 6zM23 7l6-6v20l-6 8z" fill="#7e92ad" stroke="#37455a" strokeWidth="1.300" />
      <path d="M1 7h22v22H1z" fill={face} stroke="#37455a" strokeWidth="1.300" />
      {extra}
    </svg>
  );
}

function ViewTools() {
  return (
    <div className="mt-[3px] flex w-[33px] shrink-0 flex-col items-start overflow-hidden border-l border-[#bbb] bg-[#929497] pt-[13px] pl-1">
      <button aria-label="动态观察">
        <svg viewBox="0 0 30 30" className="h-[30px] w-[30px]" aria-hidden="true">
          <defs>
            <radialGradient id="ball" cx="35%" cy="30%">
              <stop offset="0" stopColor="#f4f7fa" />
              <stop offset="1" stopColor="#8196b3" />
            </radialGradient>
          </defs>
          <circle cx="15" cy="14" r="12" fill="url(#ball)" stroke="#37455a" />
          <path d="M4 17c-5 5-3 7 2 5 6-1 14-6 19-11" fill="none" stroke="#4c4c4c" strokeWidth="1.500" />
          <circle cx="24" cy="9" r="5" fill="url(#ball)" stroke="#37455a" />
        </svg>
      </button>
      <button aria-label="三维" className="mt-[6px]">
        {cube('#8196b3', <text x="9" y="26" fontSize="10" fill="#22303f">3D</text>)}
      </button>
      <button aria-label="线框" className="mt-[6px]">
        {cube('#cde4fb', <path d="M7 8v15h22M1 29l6-6" fill="none" stroke="#5d708a" strokeWidth="1.300" />)}
      </button>
      <span className="flex h-5 w-[30px] items-center justify-center"><Caret color="#2e3947" /></span>
      <button aria-label="实体">{cube('#8196b3')}</button>
      <span className="flex h-5 w-[30px] items-center justify-center"><Caret color="#2e3947" /></span>
      <button aria-label="旋转">
        <svg viewBox="0 0 30 30" className="h-[30px] w-[30px]" aria-hidden="true">
          <path d="M25 20a12 12 0 1 1-2-13" fill="none" stroke="#37455a" strokeWidth="2.500" />
          <path d="M28 3v8h-8" fill="none" stroke="#37455a" strokeWidth="2.500" />
        </svg>
      </button>
      <span className="flex h-4 w-[30px] items-center justify-center"><Caret color="#2e3947" /></span>
      <div className="mb-[5px] h-[2px] w-full bg-[#74777b]" />
      <button aria-label="显示设置">
        <svg viewBox="0 0 30 30" className="h-[30px] w-[30px]" aria-hidden="true">
          <path d="M1 5 4 1h26v28H1zM1 5h29" fill="#8196b3" stroke="#37455a" strokeWidth="1.300" />
          <path
            d="m5 9 2 2 3-3m9 1 2 2 3-3M15 12v14M5 13h3v3H5zm0 5h3v3H5zm0 5h3v3H5zm5-8h2m-2 5h2m-2 5h2m7-12h3v3h-3zm0 5h3v3h-3zm0 5h3v3h-3zm5-8h3m-3 5h3m-3 5h3"
            fill="none"
            stroke="#37455a"
            strokeWidth="1.200"
          />
        </svg>
      </button>
    </div>
  );
}

export default function App() {
  return (
    <div className="relative flex h-screen flex-col overflow-hidden bg-white font-['Noto_Sans_CJK_SC',sans-serif] text-[15px] leading-5 text-[#111]">
      <MenuBar />
      <Ribbon />
      <div className="flex h-[37px] shrink-0 gap-[6px] border-b border-[#8b8f97] bg-[#c9ccd1] pt-1 pl-1">
        <Combo label="楼层" value="首层" />
        <Combo label="构件类型" value="常用构件类型" />
        <Combo label="类别" value="轴网" />
        <Combo label="构件" value="轴网-1" />
      </div>
      <div className="flex min-h-0 flex-1">
        <aside className="flex w-[216px] shrink-0 flex-col border-x border-[#cfd1d5]">
          <h2 className="flex h-[25px] shrink-0 items-center border-b border-[#c8cacf] bg-[#eee] pb-[2px] pl-[10px] text-[#666]">
            导航树
          </h2>
          <div className="flex h-[38px] shrink-0 items-center border-b border-[#c8cacf] bg-[#eee] pr-[9px] pl-[7px]">
            <button aria-label="展开">
              <svg viewBox="0 0 16 16" className="h-4 w-4" aria-hidden="true">
                <path d="M4 7v8M0 11h8M12 1v8M8 5h8" stroke={B} strokeWidth="2.500" />
              </svg>
            </button>
            <button aria-label="列表视图" className="mr-[10px] ml-auto rounded-[4px] border border-[#56a3f5] bg-[#e7f2fe] p-1">
              <svg viewBox="0 0 22 20" className="h-5 w-[22px]" aria-hidden="true">
                <path
                  d="M4 2h3v3H4zm0 6h3v3H4zm0 7h3v3H4zM9 3.500h10M9 9.500h10M9 16.500h10"
                  fill="none"
                  stroke="#56a3f5"
                  strokeWidth="1.300"
                />
              </svg>
            </button>
            <button aria-label="图标视图">
              <svg viewBox="0 0 20 17" className="h-[17px] w-5" aria-hidden="true">
                <path d="M.5.500h18v16H.5z" fill="#fff" stroke="#56a3f5" />
                <path d="M0 0h19v7H0z" fill="#56a3f5" />
                <path d="M3 2v3m3-3v3m3-3v3" stroke="#fff" />
                <path d="M13 2h4l-2 3z" fill="#fff" />
                <path d="M3 10h10M3 13h7" stroke="#56a3f5" strokeWidth="1.500" />
              </svg>
            </button>
          </div>
          <NavTree />
          <footer className="h-[17px] shrink-0 overflow-hidden border-t-2 border-[#cfd1d5] bg-[#dfdfe1] pt-2 pl-[2px] leading-5 whitespace-nowrap text-[#444]">
            X = -1145 Y = 585
          </footer>
        </aside>
        <div className="w-[6px] shrink-0 bg-white" />
        <section className="flex w-[356px] shrink-0 flex-col border-x border-[#cfd1d5]">
          <div className="flex h-[14px] shrink-0 items-center justify-end border-b border-[#c8cacf] bg-[#d2d3d9] pr-[6px]">
            <button aria-label="关闭">
              <svg viewBox="0 0 8 8" className="h-[7px] w-[7px]" aria-hidden="true">
                <path d="m0 0 8 8M8 0 0 8" stroke="#777" strokeWidth="1.500" />
              </svg>
            </button>
          </div>
          <ComponentList wide />
        </section>
        <div className="w-[6px] shrink-0 bg-white" />
        <main className="min-w-0 flex-1 bg-black" />
        <div className="flex bg-black">
          <ViewTools />
        </div>
      </div>
      <DefineDialog />
    </div>
  );
}
